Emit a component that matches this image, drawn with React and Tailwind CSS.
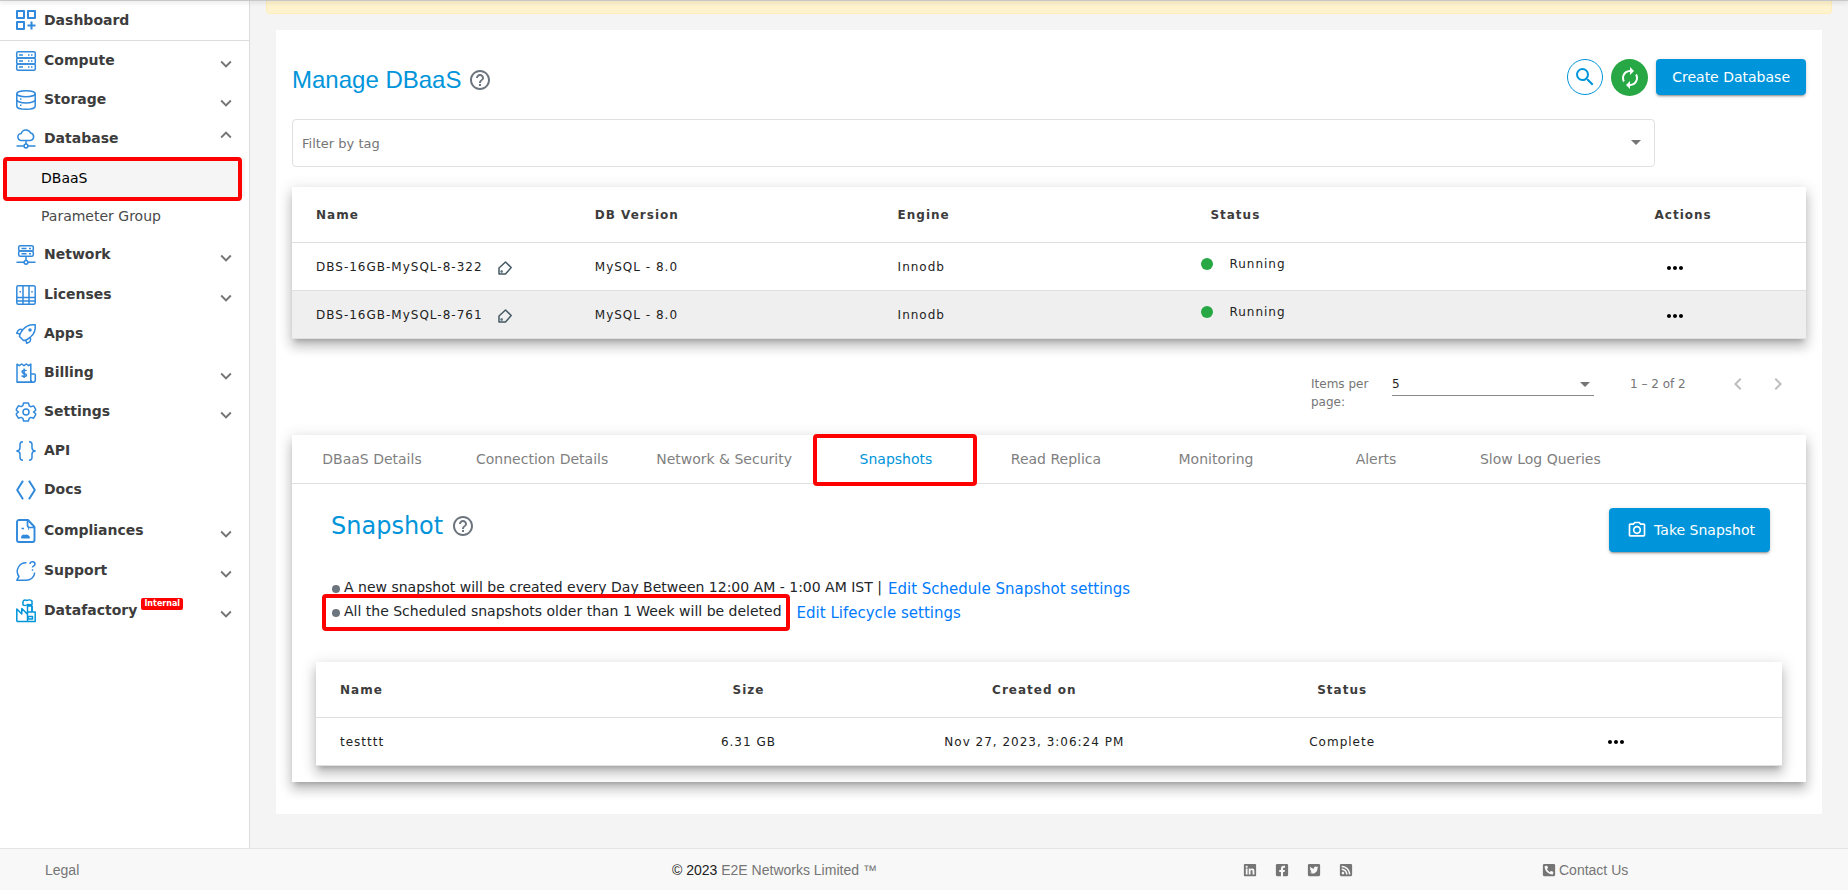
/**
 * Manage DBaaS page: sidebar, database list, snapshot details and footer.
 */
import { FaFacebookSquare, FaLinkedin, FaPhoneSquareAlt, FaRssSquare, FaTwitterSquare } from 'react-icons/fa'
import {
  MdArrowDropDown,
  MdAutorenew,
  MdChevronLeft,
  MdChevronRight,
  MdExpandLess,
  MdExpandMore,
  MdHelpOutline,
  MdMoreHoriz,
  MdOutlinePhotoCamera,
  MdSearch,
} from 'react-icons/md'

/* Sidebar glyphs, drawn on a 20x20 grid */
const ICONS = {
  dashboard: (
    <g strokeWidth="2">
      <path d="M1 1h7v7H1zM12 1h7v7h-7zM1 12h7v7H1z" />
      <path d="M15.5 11.500v8M11.500 15.500h8" />
    </g>
  ),
  compute: (
    <>
      <rect x=".7" y=".7" width="18.600" height="6.200" rx="1.500" />
      <rect x=".7" y="6.900" width="18.600" height="6.200" rx="1.500" />
      <rect x=".7" y="13.100" width="18.600" height="6.200" rx="1.500" />
      <path d="M3 4h4M3 10h4M3 16h4M12 4h1.500M15 4h1.500M12 10h1.500M15 10h1.500M12 16h1.500M15 16h1.500" />
    </>
  ),
  storage: (
    <>
      <ellipse cx="10" cy="3.700" rx="9.200" ry="3" />
      <path d="M.8 3.700v12.500c0 1.700 4 3.100 9.200 3.100s9.200-1.400 9.200-3.100V3.700" />
      <path d="M.8 9.700c0 1.800 4 3.300 9.200 3.300s9.200-1.500 9.200-3.300" />
      <path d="M4 9h1.500M4 15.300h1.500" />
    </>
  ),
  database: (
    <>
      <path d="M5.500 11.500a3.500 3.500 0 0 1-.3-7A5 5 0 0 1 14.600 4a3.800 3.800 0 0 1-.4 7.500z" />
      <path d="M10 11.500v3.500M.5 17h7.500M12 17h7.500" />
      <circle cx="10" cy="17" r="1.900" />
    </>
  ),
  network: (
    <>
      <rect x="2.700" y=".7" width="14.600" height="5.300" rx="1.500" />
      <rect x="2.700" y="6" width="14.600" height="5.300" rx="1.500" />
      <path d="M5.500 3.400h5M13 3.400h2M5.500 8.700h5M13 8.700h2M10 11.300V15M.5 17.300h7.500M12 17.300h7.500" />
      <circle cx="10" cy="17.300" r="1.900" />
    </>
  ),
  licenses: (
    <>
      <rect x=".8" y=".8" width="18.400" height="18.400" rx="1.500" />
      <path d="M7 .8v18.400M13 .8v18.400M.8 12.500h18.400M.8 16h18.400M4.300 6v1.500M16 6v1.500" />
    </>
  ),
  apps: (
    <>
      <path d="M19.200.8c-5-.6-9 1-12 4.500C5 8 3.500 11 3.500 12.500l4 4C9 16.500 12 15 14.700 12.800 18.200 9.800 19.800 6 19.200.8z" />
      <path d="M6.500 6C4 4.500 2 5.500.7 9.300L4 10M14 13.500c1.500 2.500.5 4.500-3.300 5.800L9.800 16" />
      <circle cx="14" cy="6" r="1" />
    </>
  ),
  billing: (
    <>
      <path d="M1 19.200V1.200l2.300 1.500L5.600 1 8 2.700 10.300 1l2.300 1.700L14.800 1v18.200z" />
      <path d="M14.800 11h3.500c.6 0 1 .4 1 1v5a2.200 2.200 0 0 1-4.400 0M2 19.200h15" />
      <path d="M10.300 8c-.3-1-4.300-1.300-4.300.8 0 2.200 4.400 1 4.400 3.200 0 2-4.200 2-4.700.5M8.100 5.500v9.500" />
    </>
  ),
  settings: (
    <>
      <path d="M7.600.9h4.800l.8 2.900 1.500.9 2.900-.8 2 3.300v1.200L17.500 10l2.100 1.700v1.200l-2 3.300-2.900-.8-1.500.9-.8 2.800H7.600l-.8-2.800-1.500-.9-2.900.8-2-3.300v-1.200L2.500 10 .4 8.300V7.100l2-3.300 2.900.8 1.500-.9z" />
      <circle cx="10" cy="10" r="3" />
    </>
  ),
  api: (
    <path d="M7 .8C4.500.8 4 1.800 4 3.500v3.300C4 8.800 3 9.800.8 10 3 10.200 4 11.200 4 13.200v3.300c0 1.700.5 2.700 3 2.700M13 .8c2.500 0 3 1 3 2.700v3.300c0 2 1 3 3.200 3.200-2.200.2-3.200 1.200-3.200 3.200v3.300c0 1.700-.5 2.700-3 2.700" />
  ),
  docs: <path strokeWidth="2" d="M7 .8 1.200 10 7 19.200M13 .8l5.800 9.200-5.800 9.200" />,
  compliances: (
    <>
      <path strokeWidth="1.900" d="M12-1H3a2 2 0 0 0-2 2v18a2 2 0 0 0 2 2h13.500a2 2 0 0 0 2-2V6z" />
      <path strokeWidth="1.700" d="M11.500-.5V4c0 1.500.5 2.500 2 2.500h4.500M5.500 7.500h2.500M12 8h1" />
      <path strokeWidth="2" d="M6 16.500c.5-2 2-2.500 3-1 1.500-1.500 3-1 4 1z" />
    </>
  ),
  support: (
    <>
      <path d="M10.500 1.700A8.700 8.700 0 0 0 3 15.500L.8 19.200h8.700c5 .3 9-3 9.200-7.700" />
      <path d="M14 3c.3-3 5-2.800 5 .2 0 1.600-2.500 1.600-2.500 3.300M16.500 8.300v1.400" />
    </>
  ),
  datafactory: (
    <g stroke="#0095da">
      <path d="M.8 20.500V8l5 5V7.500l5.700 5.700V20.500M.8 20.500h18.400V11h-7.700M11.500 13V5h4.500v6M7 4V.5C8-1.500 10-1 11-.5c1.500-1 4-.5 5 .5v3.500c-2 1-3-.5-4.500 0C10 4.500 8.500 5 7 4z" />
      <path d="M12 15.500h4.500v2.500H12zM16 5v6" />
    </g>
  ),
}

const NAV_ITEMS = [
  { label: 'Compute', icon: 'compute', arrow: 'down', height: 'h-[39px]' },
  { label: 'Storage', icon: 'storage', arrow: 'down', height: 'h-[39px]' },
  { label: 'Database', icon: 'database', arrow: 'up', height: 'h-[39px]', open: true },
  { label: 'Network', icon: 'network', arrow: 'down', height: 'h-10' },
  { label: 'Licenses', icon: 'licenses', arrow: 'down', height: 'h-[39px]' },
  { label: 'Apps', icon: 'apps', height: 'h-[39px]' },
  { label: 'Billing', icon: 'billing', arrow: 'down', height: 'h-[39px]' },
  { label: 'Settings', icon: 'settings', arrow: 'down', height: 'h-[39px]' },
  { label: 'API', icon: 'api', height: 'h-[39px]' },
  { label: 'Docs', icon: 'docs', height: 'h-10' },
  { label: 'Compliances', icon: 'compliances', arrow: 'down', height: 'h-[41px]' },
  { label: 'Support', icon: 'support', arrow: 'down', height: 'h-10' },
  { label: 'Datafactory', icon: 'datafactory', arrow: 'down', height: 'h-10', badge: 'Internal' },
]

const DATABASES = [
  { name: 'DBS-16GB-MySQL-8-322', version: 'MySQL - 8.0', engine: 'Innodb', status: 'Running' },
  { name: 'DBS-16GB-MySQL-8-761', version: 'MySQL - 8.0', engine: 'Innodb', status: 'Running' },
]

const TABS = [
  'DBaaS Details',
  'Connection Details',
  'Network & Security',
  'Snapshots',
  'Read Replica',
  'Monitoring',
  'Alerts',
  'Slow Log Queries',
]

const SOCIAL_LINKS = [
  { label: 'LinkedIn', Icon: FaLinkedin },
  { label: 'Facebook', Icon: FaFacebookSquare },
  { label: 'Twitter', Icon: FaTwitterSquare },
  { label: 'RSS', Icon: FaRssSquare },
]

const elevation =
  'shadow-[0_5px_5px_-3px_rgba(0,0,0,0.2),0_8px_10px_1px_rgba(0,0,0,0.14),0_3px_14px_2px_rgba(0,0,0,0.12)]'
const buttonShadow =
  'shadow-[0_3px_1px_-2px_rgba(0,0,0,0.2),0_2px_2px_0_rgba(0,0,0,0.14),0_1px_5px_0_rgba(0,0,0,0.12)]'
const tableBase =
  'w-full table-fixed border-separate border-spacing-0 bg-white text-xs tracking-[1px] [&_th]:border-b [&_td]:border-b [&_th]:border-[#e0e0e0] [&_td]:border-[#e0e0e0]'

function NavIcon({ name }) {
  return (
    <svg
      className="w-5 h-5 shrink-0 overflow-visible"
      viewBox="0 0 20 20"
      fill="none"
      stroke="#3089dc"
      strokeWidth="1.500"
      strokeLinejoin="round"
      aria-hidden="true"
    >
      {ICONS[name]}
    </svg>
  )
}

/** Red frame laid over the element that it points out. */
function Highlight({ className }) {
  return <span aria-hidden="true" className={`absolute border-4 border-[#ff0000] rounded-sm pointer-events-none ${className}`} />
}

function NavItem({ item }) {
  return (
    <a href="#" className={`flex items-center gap-2 pl-4 pr-3 pb-0.5 ${item.height}`}>
      <span className="pt-0.5"><NavIcon name={item.icon} /></span>
      <span className="text-sm font-bold text-[#3c3c3c]">{item.label}</span>
      {item.badge && (
        <span className="mb-3 -ml-1 px-[3px] rounded-xs bg-[#ff0000] text-white text-[8px] leading-3 font-bold">
          {item.badge}
        </span>
      )}
      {item.arrow === 'down' && <MdExpandMore size={22} className="ml-auto mt-2 text-[#757575]" aria-hidden="true" />}
      {item.arrow === 'up' && <MdExpandLess size={22} className="ml-auto mb-1.5 text-[#757575]" aria-hidden="true" />}
    </a>
  )
}

function Sidebar() {
  return (
    <aside className="w-[250px] shrink-0 bg-white border-r border-[#dcdcdc]">
      <nav aria-label="Main navigation">
        <a href="#" className="flex items-center gap-2 pl-4 h-[41px] border-b border-[#dcdcdc]">
          <NavIcon name="dashboard" />
          <span className="text-sm font-bold text-[#3c3c3c]">Dashboard</span>
        </a>
        <ul>
          {NAV_ITEMS.map((item) => (
            <li key={item.label}>
              <NavItem item={item} />
              {item.open && (
                <ul className="text-sm">
                  <li className="relative px-1">
                    <a href="#" aria-current="page" className="flex items-center h-[39px] pl-[37px] bg-[#f5f5f5] text-black">
                      DBaaS
                    </a>
                    <Highlight className="left-[3px] right-[7px] -top-px -bottom-1" />
                  </li>
                  <li className="px-1">
                    <a href="#" className="flex items-center h-[38px] pl-[37px] text-[#4a4a4a]">Parameter Group</a>
                  </li>
                </ul>
              )}
            </li>
          ))}
        </ul>
      </nav>
    </aside>
  )
}

function TagIcon() {
  return (
    <svg width="14" height="14" viewBox="0 0 14 14" fill="none" stroke="#455a64" strokeWidth="1.500" strokeLinejoin="round" aria-hidden="true">
      <path d="M1 7 7.500 1l5.700 5.500-5.700 6.500H1z" />
      <circle cx="3.600" cy="10.600" r=".5" />
    </svg>
  )
}

function DatabaseTable() {
  return (
    <table className={`mt-5 text-left ${tableBase} ${elevation}`}>
      <colgroup>
        <col className="w-[20%]" />
        <col className="w-[20%]" />
        <col className="w-[20%]" />
        <col className="w-[30%]" />
        <col className="w-[10%]" />
      </colgroup>
      <thead>
        <tr className="h-14 text-[#3c3c3c]">
          <th className="pl-6">Name</th>
          <th>DB Version</th>
          <th>Engine</th>
          <th className="pl-2.5">Status</th>
          <th>Actions</th>
        </tr>
      </thead>
      <tbody>
        {DATABASES.map((db) => (
          <tr key={db.name} className="h-12 even:bg-[#efefef] text-[#212121]">
            <td className="pl-6">
              <span className="flex items-center gap-[15px]">
                {db.name}
                <button type="button" aria-label="Edit tags" className="pt-0.5"><TagIcon /></button>
              </span>
            </td>
            <td>{db.version}</td>
            <td>{db.engine}</td>
            <td className="pl-px pb-1.5">
              <span className="flex items-center gap-4">
                <span className="w-3 h-3 rounded-full bg-[#28a745]" />
                {db.status}
              </span>
            </td>
            <td className="pl-2">
              <button type="button" aria-label="Actions" className="block pt-0.5 text-black"><MdMoreHoriz size={24} /></button>
            </td>
          </tr>
        ))}
      </tbody>
    </table>
  )
}

function Paginator() {
  return (
    <div className="flex justify-end items-start h-24 pt-9 pr-3 text-xs text-[#757575]">
      <label htmlFor="page-size" className="w-[81px] pr-4 leading-[18px]">Items per page:</label>
      <div className="relative w-[202px] mr-9">
        <select id="page-size" className="block w-full h-[21px] pb-0.5 appearance-none border-b border-[#8a8a8a] text-[#212121]">
          <option>5</option>
        </select>
        <MdArrowDropDown size={24} className="absolute right-[-3px] -top-[3px] pointer-events-none" aria-hidden="true" />
      </div>
      <span className="w-[88px] leading-[18px]">1 – 2 of 2</span>
      <button type="button" aria-label="Previous page" className="w-10 text-[#bdbdbd]"><MdChevronLeft size={24} className="-mt-[3px] mx-auto" /></button>
      <button type="button" aria-label="Next page" className="w-10 -mr-1 text-[#bdbdbd]"><MdChevronRight size={24} className="-mt-[3px] mx-auto" /></button>
    </div>
  )
}

function SnapshotTable() {
  return (
    <table className={`text-center ${tableBase} ${elevation}`}>
      <colgroup>
        <col className="w-[24%]" />
        <col className="w-[11%]" />
        <col className="w-[28%]" />
        <col className="w-[14%]" />
        <col className="w-[23%]" />
      </colgroup>
      <thead>
        <tr className="h-14 text-[#3c3c3c]">
          <th className="pl-6 text-left">Name</th>
          <th>Size</th>
          <th>Created on</th>
          <th>Status</th>
          <th aria-label="Actions" />
        </tr>
      </thead>
      <tbody>
        <tr className="h-12 text-[#212121]">
          <td className="pl-6 text-left">testttt</td>
          <td>6.31 GB</td>
          <td>Nov 27, 2023, 3:06:24 PM</td>
          <td>Complete</td>
          <td className="pl-1.5">
            <button type="button" aria-label="Actions" className="block mx-auto text-black"><MdMoreHoriz size={24} /></button>
          </td>
        </tr>
      </tbody>
    </table>
  )
}

function DetailsPanel() {
  return (
    <section className={`bg-white ${elevation}`}>
      <div role="tablist" className="flex h-[49px] border-b border-[#e0e0e0]">
        {TABS.map((tab) => {
          const isActive = tab === 'Snapshots'
          return (
            <button
              key={tab}
              type="button"
              role="tab"
              aria-selected={isActive}
              className={`relative min-w-40 px-6 text-sm whitespace-nowrap ${isActive ? 'text-[#0095da]' : 'text-[#7f7f7f]'}`}
            >
              {tab}
              {isActive && <Highlight className="-left-[3px] -right-px -top-px -bottom-[3px]" />}
            </button>
          )
        })}
      </div>

      <div className="px-6 pt-6 pb-4">
        <div className="flex justify-between items-start pl-[15px] pr-3">
          <h2 className="flex items-center gap-2 pt-0.5 text-2xl leading-8 text-[#0095da]">
            Snapshot
            <MdHelpOutline size={24} className="text-[#6c757d]" aria-hidden="true" />
          </h2>
          <button
            type="button"
            className={`flex items-center gap-[7px] h-11 pl-[18px] pr-[15px] rounded bg-[#0095da] text-white text-sm ${buttonShadow}`}
          >
            <MdOutlinePhotoCamera size={20} aria-hidden="true" />
            Take Snapshot
          </button>
        </div>

        <ul className="pl-4 pt-[23px] text-sm leading-6 text-[#212529]">
          <li className="flex items-center">
            <span className="w-2 h-2 mr-1 mt-1 rounded-full bg-[#6c757d]" />
            A new snapshot will be created every Day Between 12:00 AM - 1:00 AM IST |
            <a href="#" className="ml-1.5 pt-1 text-[15px] leading-5 text-[#007bff]">Edit Schedule Snapshot settings</a>
          </li>
          <li className="flex items-center">
            <span className="relative flex items-center">
              <span className="w-2 h-2 mr-1 mt-1 rounded-full bg-[#6c757d]" />
              All the Scheduled snapshots older than 1 Week will be deleted
              <Highlight className="-left-2.5 -right-2 -top-[5px] -bottom-2" />
            </span>
            <a href="#" className="ml-[15px] pt-1 text-[15px] leading-5 text-[#007bff]">Edit Lifecycle settings</a>
          </li>
        </ul>

        <div className="pt-[39px]">
          <SnapshotTable />
        </div>
      </div>
    </section>
  )
}

function Footer() {
  return (
    <footer className="grid grid-cols-[672fr_571fr_299fr_306fr] items-center h-[42px] border-t border-[#e4e4e4] bg-[#f8f8f8] font-['Liberation_Sans',sans-serif] text-sm text-[#757575]">
      <a href="#" className="pl-[45px]">Legal</a>
      <p><span className="text-[#212121]">© 2023</span> E2E Networks Limited ™</p>
      <div className="flex gap-[18px]">
        {SOCIAL_LINKS.map(({ label, Icon }) => (
          <a key={label} href="#" aria-label={label}><Icon size={14} /></a>
        ))}
      </div>
      <a href="#" className="flex items-center gap-[3px]">
        <FaPhoneSquareAlt size={14} aria-hidden="true" />
        Contact Us
      </a>
    </footer>
  )
}

export default function App() {
  return (
    <div className="min-h-screen flex flex-col bg-[#f4f4f4] font-['DejaVu_Sans',sans-serif]">
      <div className="relative h-px -mb-px bg-[#c8c8c8] shadow-[0_1px_4px_rgba(0,0,0,0.3)]" />
      <div className="flex flex-1">
        <Sidebar />
        <main className="flex-1 min-w-0 px-4">
          <div className="h-3.5 rounded-b border border-t-0 border-[#ffeeba] bg-[#fff3cd]" />
          <div className="mt-4 mb-[34px] mx-2.5 px-4 pt-[29px] pb-8 bg-white">
            <div className="flex justify-between items-start">
              <h1 className="flex items-center gap-[7px] pt-[5px] font-['Liberation_Sans',sans-serif] text-2xl leading-8 text-[#0095da]">
                Manage DBaaS
                <MdHelpOutline size={24} className="text-[#6c757d]" aria-hidden="true" />
              </h1>
              <div className="flex items-start gap-2">
                <button type="button" aria-label="Search" className="w-9 h-9 flex items-center justify-center rounded-full border border-[#0095da] text-[#0095da]">
                  <MdSearch size={24} />
                </button>
                <button type="button" aria-label="Refresh" className="w-[37px] h-[37px] flex items-center justify-center rounded-full bg-[#28a745] text-white">
                  <MdAutorenew size={24} />
                </button>
                <button type="button" className={`h-9 px-4 rounded bg-[#0095da] text-white text-sm ${buttonShadow}`}>
                  Create Database
                </button>
              </div>
            </div>

            <div className="relative w-[90%] mt-[23px]">
              <input
                type="text"
                aria-label="Filter by tag"
                placeholder="Filter by tag"
                className="block w-full h-12 px-[9px] rounded border border-[#e0e0e0] text-[13px] placeholder:text-[#757575]"
              />
              <MdArrowDropDown size={24} className="absolute right-[7px] top-[11px] text-[#757575]" aria-hidden="true" />
            </div>

            <DatabaseTable />
            <Paginator />
            <DetailsPanel />
          </div>
        </main>
      </div>
      <Footer />
    </div>
  )
}
